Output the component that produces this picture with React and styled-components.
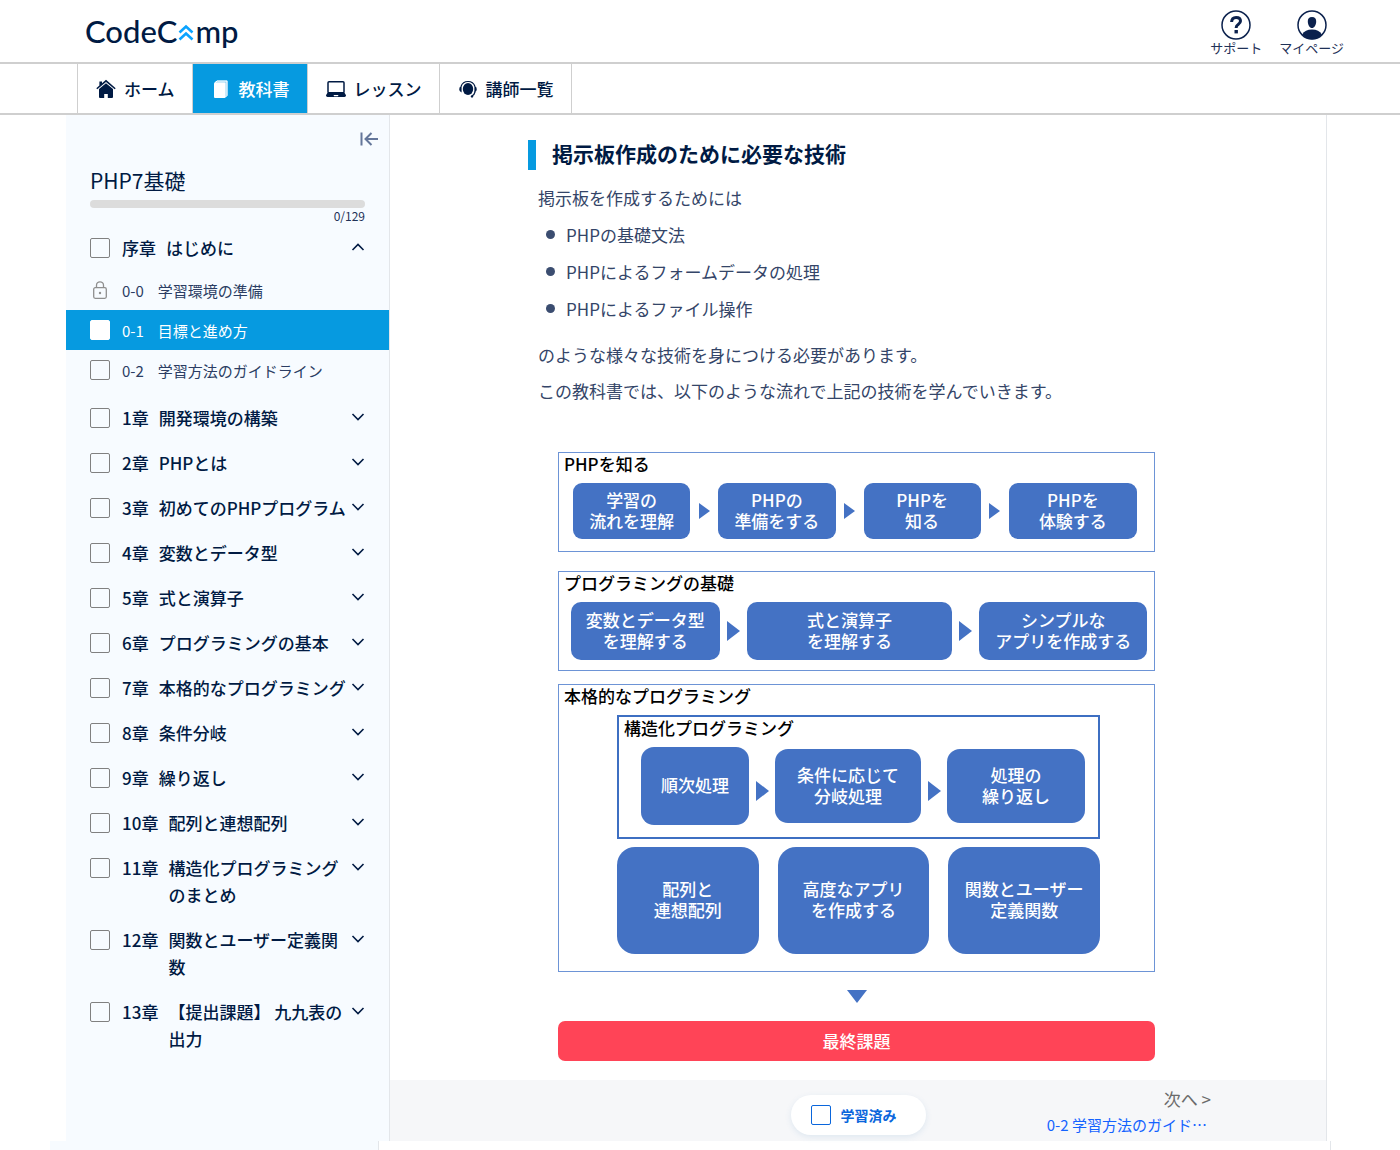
import React, { useState } from "react";
import styled, { createGlobalStyle } from "styled-components";

const GlobalStyle = createGlobalStyle`
  * {
    box-sizing: border-box;
  }

  body {
    margin: 0;
    background: #fff;
    color: #001a43;
    font-family: "Noto Sans CJK JP", sans-serif;
  }

  ul, h1, h2, h3, p {
    margin: 0;
    padding: 0;
    font-size: inherit;
    font-weight: inherit;
  }

  ul {
    list-style: none;
  }

  a {
    color: inherit;
    text-decoration: none;
  }

  button {
    padding: 0;
    border: 0;
    background: none;
    color: inherit;
    font: inherit;
    cursor: pointer;
  }

  svg {
    display: block;
    flex: none;
  }
`;

// header

const Header = styled.header`
  display: flex;
  justify-content: space-between;
  height: 64px;
  padding: 0 56px 0 85px;
  border-bottom: 2px solid #cfcfcf;
`;

const Logo = styled.a`
  display: flex;
  align-items: center;
  font-family: Lato, sans-serif;
  font-size: 31px;
  font-weight: 500;
  line-height: 62px;
`;

const HeaderLinks = styled.div`
  display: flex;
  gap: 17px;
  padding-top: 10px;
`;

const HeaderLink = styled.a`
  display: flex;
  flex-direction: column;
  align-items: center;
  color: #1f3157;
  font-size: 13px;
  line-height: 16px;
`;

const Nav = styled.nav`
  display: flex;
  height: 51px;
  padding-left: 77px;
  border-bottom: 2px solid #cfcfcf;
`;

const NavItem = styled.a`
  display: flex;
  align-items: center;
  gap: 8px;
  padding: 0 17px 0 18px;
  border-left: 1px solid #cfcfcf;
  background: ${(props) => (props.$active ? "#069ae0" : "#fff")};
  color: ${(props) => (props.$active ? "#fff" : "#001a43")};
  font-size: 17px;
  font-weight: 500;

  &:last-child {
    border-right: 1px solid #cfcfcf;
  }
`;

// sidebar

const Shell = styled.div`
  display: flex;
  margin: 0 73px 0 66px;
`;

const Sidebar = styled.aside`
  flex: none;
  width: 324px;
  padding-top: 15px;
  border-right: 1px solid #e3e6ea;
  background: #f7fbff;
`;

const CollapseButton = styled.button`
  display: block;
  margin: 0 11px 0 auto;
`;

const Course = styled.div`
  padding: 19px 24px 1px;
`;

const CourseTitle = styled.h1`
  font-size: 21px;
  line-height: 26px;
`;

const ProgressTrack = styled.div`
  height: 8px;
  margin-top: 7px;
  border-radius: 4px;
  background: #dcdcdc;
  overflow: hidden;
`;

const ProgressBar = styled.div`
  height: 100%;
  background: #069ae0;
`;

const ProgressCount = styled.p`
  color: #1f3157;
  font-size: 12px;
  line-height: 16px;
  text-align: right;
`;

const ChapterRow = styled.div`
  display: flex;
  gap: 4px;
  padding: 9px 24px;
  font-size: 17px;
  font-weight: 500;
  line-height: 27px;
`;

const ChapterLabel = styled.label`
  display: flex;
  flex: 1;
  align-items: flex-start;
  gap: 10px;
  min-width: 0;
`;

const ChapterNumber = styled.span`
  flex: none;
`;

const ToggleButton = styled.button`
  display: flex;
  align-items: center;
  width: 14px;
  height: 25px;
`;

const Checkbox = styled.input.attrs({ type: "checkbox" })`
  appearance: none;
  flex: none;
  width: 20px;
  height: 20px;
  margin: 4px 2px 0 0;
  border: 1px solid ${(props) => (props.$active ? "#fff" : "#808080")};
  border-radius: 2px;
  background: ${(props) => (props.$active ? "#fff" : "transparent")};

  &:checked {
    background: #069ae0;
  }
`;

const SectionList = styled.ul`
  padding-bottom: 5px;
`;

const SectionLabel = styled.label`
  display: flex;
  align-items: center;
  height: 40px;
  padding: 0 24px;
  background: ${(props) => (props.$active ? "#069ae0" : "transparent")};
  color: ${(props) => (props.$active ? "#fff" : "#2b3d63")};
  font-size: 15px;

  ${Checkbox}, svg {
    margin: 0 12px 0 0;
  }
`;

const SectionNumber = styled.span`
  margin-right: 14px;
`;

// textbook

const Main = styled.main`
  flex: 1;
  min-width: 0;
  border-right: 1px solid #e3e6ea;
`;

const Article = styled.article`
  max-width: 660px;
  margin: 0 auto;
  padding: 25px 0 19px;
`;

const Heading = styled.h2`
  padding: 0 0 3px 16px;
  border-left: 8px solid #069ae0;
  font-size: 21px;
  font-weight: 700;
  line-height: 27px;
`;

const Prose = styled.div`
  padding: 10px 0 43px 10px;
  color: #344568;
  font-size: 17px;
  line-height: 36px;
`;

const Bullets = styled.ul`
  padding-bottom: 10px;
`;

const Bullet = styled.li`
  display: flex;
  align-items: center;
  gap: 11px;
  padding-left: 8px;
  line-height: 37px;

  &::before {
    content: "";
    width: 9px;
    height: 9px;
    border-radius: 50%;
    background: #3b4d70;
  }
`;

// flow chart

const Chart = styled.div`
  display: flex;
  flex-direction: column;
  max-width: 597px;
  margin-left: 30px;
  font-size: 17px;
  font-weight: 500;
  line-height: 21px;
`;

const Stage = styled.section`
  margin-bottom: ${(props) => props.$after}px;
  border: 1px solid #6d94d6;
`;

const Group = styled.section`
  border: 2px solid #3e6fc2;
`;

const StageTitle = styled.h3`
  padding: 0 5px 8px;
  color: #000;
  line-height: 22px;
`;

const Flow = styled.div`
  display: flex;
  align-items: center;
  padding: ${(props) => props.$pad};
`;

const StageBody = styled.div`
  display: flex;
  flex-direction: column;
  gap: 8px;
  padding: 0 54px 17px 58px;
`;

const Node = styled.div`
  display: flex;
  flex: ${(props) => props.$share} 1 0;
  align-items: center;
  justify-content: center;
  height: ${(props) => props.$height}px;
  padding-bottom: 3px;
  border-radius: ${(props) => props.$radius}px;
  background: #4472c4;
  color: #fff;
  text-align: center;
  white-space: pre;
`;

const ArrowSlot = styled.span`
  display: flex;
  flex: none;
  justify-content: center;
  width: ${(props) => props.$width}px;
  padding-top: ${(props) => (props.$low ? 10 : 0)}px;
`;

const DownArrow = styled.div`
  display: flex;
  justify-content: center;
  padding-bottom: 18px;
`;

const FinalTask = styled.p`
  border-radius: 7px;
  background: #ff4457;
  color: #fff;
  line-height: 40px;
  text-align: center;
`;

// footer

const Footer = styled.footer`
  display: grid;
  grid-template-columns: 1fr auto 1fr;
  align-items: start;
  height: 61px;
  padding-top: 7px;
  background: #f6f7f9;
`;

const DoneLabel = styled.label`
  display: flex;
  grid-column: 2;
  align-items: center;
  gap: 10px;
  height: 40px;
  margin-top: 8px;
  padding: 0 29px 0 20px;
  border-radius: 20px;
  background: #fff;
  box-shadow: 0 2px 6px rgba(60, 120, 180, 0.12);
  color: #0a66dc;
  font-size: 14px;
  font-weight: 700;

  ${Checkbox} {
    margin: 0;
    border-color: #0a66dc;
  }
`;

const NextLinks = styled.div`
  display: flex;
  flex-direction: column;
  align-items: flex-end;
  padding-right: 115px;
  font-size: 15px;
  line-height: 27px;
`;

const NextLink = styled.a`
  color: #6b6b6b;
  font-size: 17px;
  line-height: 24px;
`;

const NextTitle = styled.a`
  padding-right: 4px;
  color: #1463ff;
`;

const Tail = styled.div`
  display: flex;
  height: 9px;
  margin: 0 69px 0 50px;
  border-right: 1px solid #e3e6ea;
`;

const TailSide = styled.div`
  width: 329px;
  border-right: 1px solid #e3e6ea;
  background: #f7fbff;
`;

const HomeIcon = () => (
  <svg width="20" height="20" viewBox="0 0 20 20">
    <path d="M10 .8 6 4.2V2.6H3.400v3.900L.3 9.200l1 1.100L10 3l8.700 7.300 1-1.100z" fill="currentColor" />
    <path d="M10 4.200 3 10.100V18q0 1 1 1h4.200v-4h3.600v4H16q1 0 1-1v-7.900z" fill="currentColor" />
  </svg>
);

const BookIcon = () => (
  <svg width="20" height="20" viewBox="0 0 20 20">
    <path d="M3.500 3.500 6 1.500h10.500v15l-2.500 2.300" fill="#9bd6f4" />
    <path d="M4 3.600 6.200 2h9.800v14.500l-1.500 1.500" fill="none" stroke="#fff" strokeWidth="1" />
    <rect x="3" y="3.500" width="11.500" height="15.500" rx="1" fill="#fff" />
  </svg>
);

const LaptopIcon = () => (
  <svg width="20" height="20" viewBox="0 0 20 20">
    <rect x="2" y="2.800" width="16" height="11" rx="1" fill="none" stroke="currentColor" strokeWidth="1.500" />
    <path d="M1.600 13.500h16.800L20 16.200q0 1.800-1.500 1.800h-17Q0 18 0 16.200z" fill="currentColor" />
    <path d="M7.500 16h5l-.6 1.200H8.100z" fill="#fff" />
  </svg>
);

const HeadsetIcon = () => (
  <svg width="20" height="20" viewBox="0 0 20 20">
    <ellipse cx="10" cy="10" rx="5.200" ry="6" fill="currentColor" />
    <path d="M3 7.500a7.400 7.400 0 0 1 14 0" fill="none" stroke="currentColor" strokeWidth="1.200" />
    <path d="M3.600 7v6.400Q1.200 12.900 1.200 10.200T3.600 7zM16.400 7v6.400q2.400-.5 2.400-3.200T16.400 7z" fill="currentColor" />
    <path d="M17.200 12.500q-.7 3-3.200 4.600" fill="none" stroke="currentColor" strokeWidth="1.200" />
    <circle cx="14" cy="17.400" r="1.200" fill="currentColor" />
  </svg>
);

const HelpIcon = () => (
  <svg width="30" height="30" viewBox="0 0 30 30">
    <circle cx="15" cy="15" r="14" fill="none" stroke="#0b214d" strokeWidth="1.500" />
    <path
      d="M10.600 12q.2-4.600 4.500-4.600 4.400 0 4.400 3.700 0 1.800-2.300 3.300-2 1.300-2 3v.7"
      fill="none"
      stroke="#0b214d"
      strokeWidth="3"
    />
    <rect x="13.500" y="20" width="3.400" height="3.400" fill="#0b214d" />
  </svg>
);

const UserIcon = () => (
  <svg width="30" height="30" viewBox="0 0 30 30">
    <circle cx="15" cy="15" r="14" fill="none" stroke="#0b214d" strokeWidth="1.500" />
    <path d="M15 7c2.900 0 4.400 1.700 4.200 4.700-.2 3.600-2 6.300-4.200 6.300s-4-2.700-4.200-6.300C10.600 8.700 12.100 7 15 7z" fill="#0b214d" />
    <path d="M5.200 24.500Q8 19.600 15 19.600t9.800 4.900Q21 29.200 15 29.200t-9.800-4.700z" fill="#0b214d" />
  </svg>
);

const LogoMark = () => (
  <svg width="18" height="20" viewBox="0 0 18 20" fill="none" stroke="#0aa3ff" strokeWidth="2.600">
    <path d="m2.500 11.500 6.500-6 6.500 6" />
    <path d="m2.500 18.500 6.500-6 6.500 6" />
  </svg>
);

const CollapseIcon = () => (
  <svg width="18" height="18" viewBox="0 0 18 18" fill="none" stroke="#64769a" strokeWidth="2">
    <path d="M1.500 2.500v13M18 9H6M11.500 3 5.500 9l6 6" />
  </svg>
);

const LockIcon = () => (
  <svg width="20" height="20" viewBox="0 0 20 20" fill="none" stroke="#8f8f8f" strokeWidth="1.300">
    <rect x="3.700" y="7.700" width="12.600" height="10.600" rx="1.500" />
    <path d="M6.500 7.500V5.300a3.500 3.500 0 0 1 7 0v2.200" />
    <circle cx="10" cy="13" r="1.200" fill="#8f8f8f" stroke="none" />
  </svg>
);

const Chevron = ({ up }) => (
  <svg width="14" height="8" viewBox="0 0 14 8" fill="none" stroke="#001a43" strokeWidth="1.600">
    <path d={up ? "m1.500 7 5.500-5.500L12.500 7" : "m1.500 1 5.500 5.500L12.500 1"} />
  </svg>
);

const Arrow = ({ slot, large, low }) => (
  <ArrowSlot $width={slot} $low={low}>
    <svg width={large ? 13 : 11} height={large ? 20 : 16} viewBox="0 0 10 10" preserveAspectRatio="none">
      <path d="M0 0 10 5 0 10z" fill="#4472c4" />
    </svg>
  </ArrowSlot>
);

const sections = [
  { no: "0-0", title: "学習環境の準備", locked: true },
  { no: "0-1", title: "目標と進め方", active: true },
  { no: "0-2", title: "学習方法のガイドライン" },
];

const chapters = [
  { no: "序章", title: "はじめに", sections },
  { no: "1章", title: "開発環境の構築" },
  { no: "2章", title: "PHPとは" },
  { no: "3章", title: "初めてのPHPプログラム" },
  { no: "4章", title: "変数とデータ型" },
  { no: "5章", title: "式と演算子" },
  { no: "6章", title: "プログラミングの基本" },
  { no: "7章", title: "本格的なプログラミング" },
  { no: "8章", title: "条件分岐" },
  { no: "9章", title: "繰り返し" },
  { no: "10章", title: "配列と連想配列" },
  { no: "11章", title: "構造化プログラミングのまとめ" },
  { no: "12章", title: "関数とユーザー定義関数" },
  { no: "13章", title: "【提出課題】 九九表の出力" },
];

function Chapter({ chapter }) {
  const [open, setOpen] = useState(Boolean(chapter.sections));

  return (
    <li>
      <ChapterRow>
        <ChapterLabel>
          <Checkbox />
          <ChapterNumber>{chapter.no}</ChapterNumber>
          <span>{chapter.title}</span>
        </ChapterLabel>
        <ToggleButton aria-label={chapter.title} aria-expanded={open} onClick={() => setOpen(!open)}>
          <Chevron up={open} />
        </ToggleButton>
      </ChapterRow>
      {open && chapter.sections && (
        <SectionList>
          {chapter.sections.map((s) => (
            <li key={s.no}>
              <SectionLabel as={s.locked ? "div" : "label"} $active={s.active}>
                {s.locked ? <LockIcon /> : <Checkbox $active={s.active} />}
                <SectionNumber>{s.no}</SectionNumber>
                <span>{s.title}</span>
              </SectionLabel>
            </li>
          ))}
        </SectionList>
      )}
    </li>
  );
}

function FlowChart() {
  return (
    <Chart>
      <Stage $after={19}>
        <StageTitle>PHPを知る</StageTitle>
        <Flow $pad="0 17px 12px 14px">
          <Node $share={117} $height={56} $radius={9}>{"学習の\n流れを理解"}</Node>
          <Arrow slot={28} />
          <Node $share={117} $height={56} $radius={9}>{"PHPの\n準備をする"}</Node>
          <Arrow slot={28} />
          <Node $share={117} $height={56} $radius={9}>{"PHPを\n知る"}</Node>
          <Arrow slot={28} />
          <Node $share={128} $height={56} $radius={9}>{"PHPを\n体験する"}</Node>
        </Flow>
      </Stage>

      <Stage $after={13}>
        <StageTitle>プログラミングの基礎</StageTitle>
        <Flow $pad="0 7px 10px 12px">
          <Node $share={149} $height={58} $radius={10}>{"変数とデータ型\nを理解する"}</Node>
          <Arrow slot={27} large />
          <Node $share={206} $height={58} $radius={10}>{"式と演算子\nを理解する"}</Node>
          <Arrow slot={27} large />
          <Node $share={168} $height={58} $radius={10}>{"シンプルな\nアプリを作成する"}</Node>
        </Flow>
      </Stage>

      <Stage $after={18}>
        <StageTitle>本格的なプログラミング</StageTitle>
        <StageBody>
          <Group>
            <StageTitle>構造化プログラミング</StageTitle>
            <Flow $pad="0 13px 12px 22px">
              <Node $share={108} $height={78} $radius={13}>順次処理</Node>
              <Arrow slot={26} large low />
              <Node $share={146} $height={74} $radius={13}>{"条件に応じて\n分岐処理"}</Node>
              <Arrow slot={26} large low />
              <Node $share={138} $height={74} $radius={13}>{"処理の\n繰り返し"}</Node>
            </Flow>
          </Group>
          <Flow $pad="0">
            <Node $share={142} $height={107} $radius={18}>{"配列と\n連想配列"}</Node>
            <ArrowSlot $width={19} />
            <Node $share={152} $height={107} $radius={18}>{"高度なアプリ\nを作成する"}</Node>
            <ArrowSlot $width={19} />
            <Node $share={152} $height={107} $radius={18}>{"関数とユーザー\n定義関数"}</Node>
          </Flow>
        </StageBody>
      </Stage>

      <DownArrow>
        <svg width="20" height="13" viewBox="0 0 20 13">
          <path d="M0 0h20L10 13z" fill="#4472c4" />
        </svg>
      </DownArrow>
      <FinalTask>最終課題</FinalTask>
    </Chart>
  );
}

export default function App() {
  const done = 0;
  const total = 129;

  return (
    <>
      <GlobalStyle />
      <Header>
        <Logo href="#">
          CodeC
          <LogoMark />
          mp
        </Logo>
        <HeaderLinks>
          <HeaderLink href="#">
            <HelpIcon />
            サポート
          </HeaderLink>
          <HeaderLink href="#">
            <UserIcon />
            マイページ
          </HeaderLink>
        </HeaderLinks>
      </Header>

      <Nav>
        <NavItem href="#"><HomeIcon />ホーム</NavItem>
        <NavItem href="#" $active><BookIcon />教科書</NavItem>
        <NavItem href="#"><LaptopIcon />レッスン</NavItem>
        <NavItem href="#"><HeadsetIcon />講師一覧</NavItem>
      </Nav>

      <Shell>
        <Sidebar>
          <CollapseButton aria-label="閉じる">
            <CollapseIcon />
          </CollapseButton>
          <Course>
            <CourseTitle>PHP7基礎</CourseTitle>
            <ProgressTrack>
              <ProgressBar style={{ width: `${(done / total) * 100}%` }} />
            </ProgressTrack>
            <ProgressCount>{done}/{total}</ProgressCount>
          </Course>
          <ul>
            {chapters.map((chapter) => (
              <Chapter key={chapter.no} chapter={chapter} />
            ))}
          </ul>
        </Sidebar>

        <Main>
          <Article>
            <Heading>掲示板作成のために必要な技術</Heading>
            <Prose>
              <p>掲示板を作成するためには</p>
              <Bullets>
                <Bullet>PHPの基礎文法</Bullet>
                <Bullet>PHPによるフォームデータの処理</Bullet>
                <Bullet>PHPによるファイル操作</Bullet>
              </Bullets>
              <p>のような様々な技術を身につける必要があります。</p>
              <p>この教科書では、以下のような流れで上記の技術を学んでいきます。</p>
            </Prose>
            <FlowChart />
          </Article>
          <Footer>
            <DoneLabel>
              <Checkbox />
              学習済み
            </DoneLabel>
            <NextLinks>
              <NextLink href="#">次へ &gt;</NextLink>
              <NextTitle href="#">0-2 学習方法のガイド…</NextTitle>
            </NextLinks>
          </Footer>
        </Main>
      </Shell>
      <Tail>
        <TailSide />
      </Tail>
    </>
  );
}
